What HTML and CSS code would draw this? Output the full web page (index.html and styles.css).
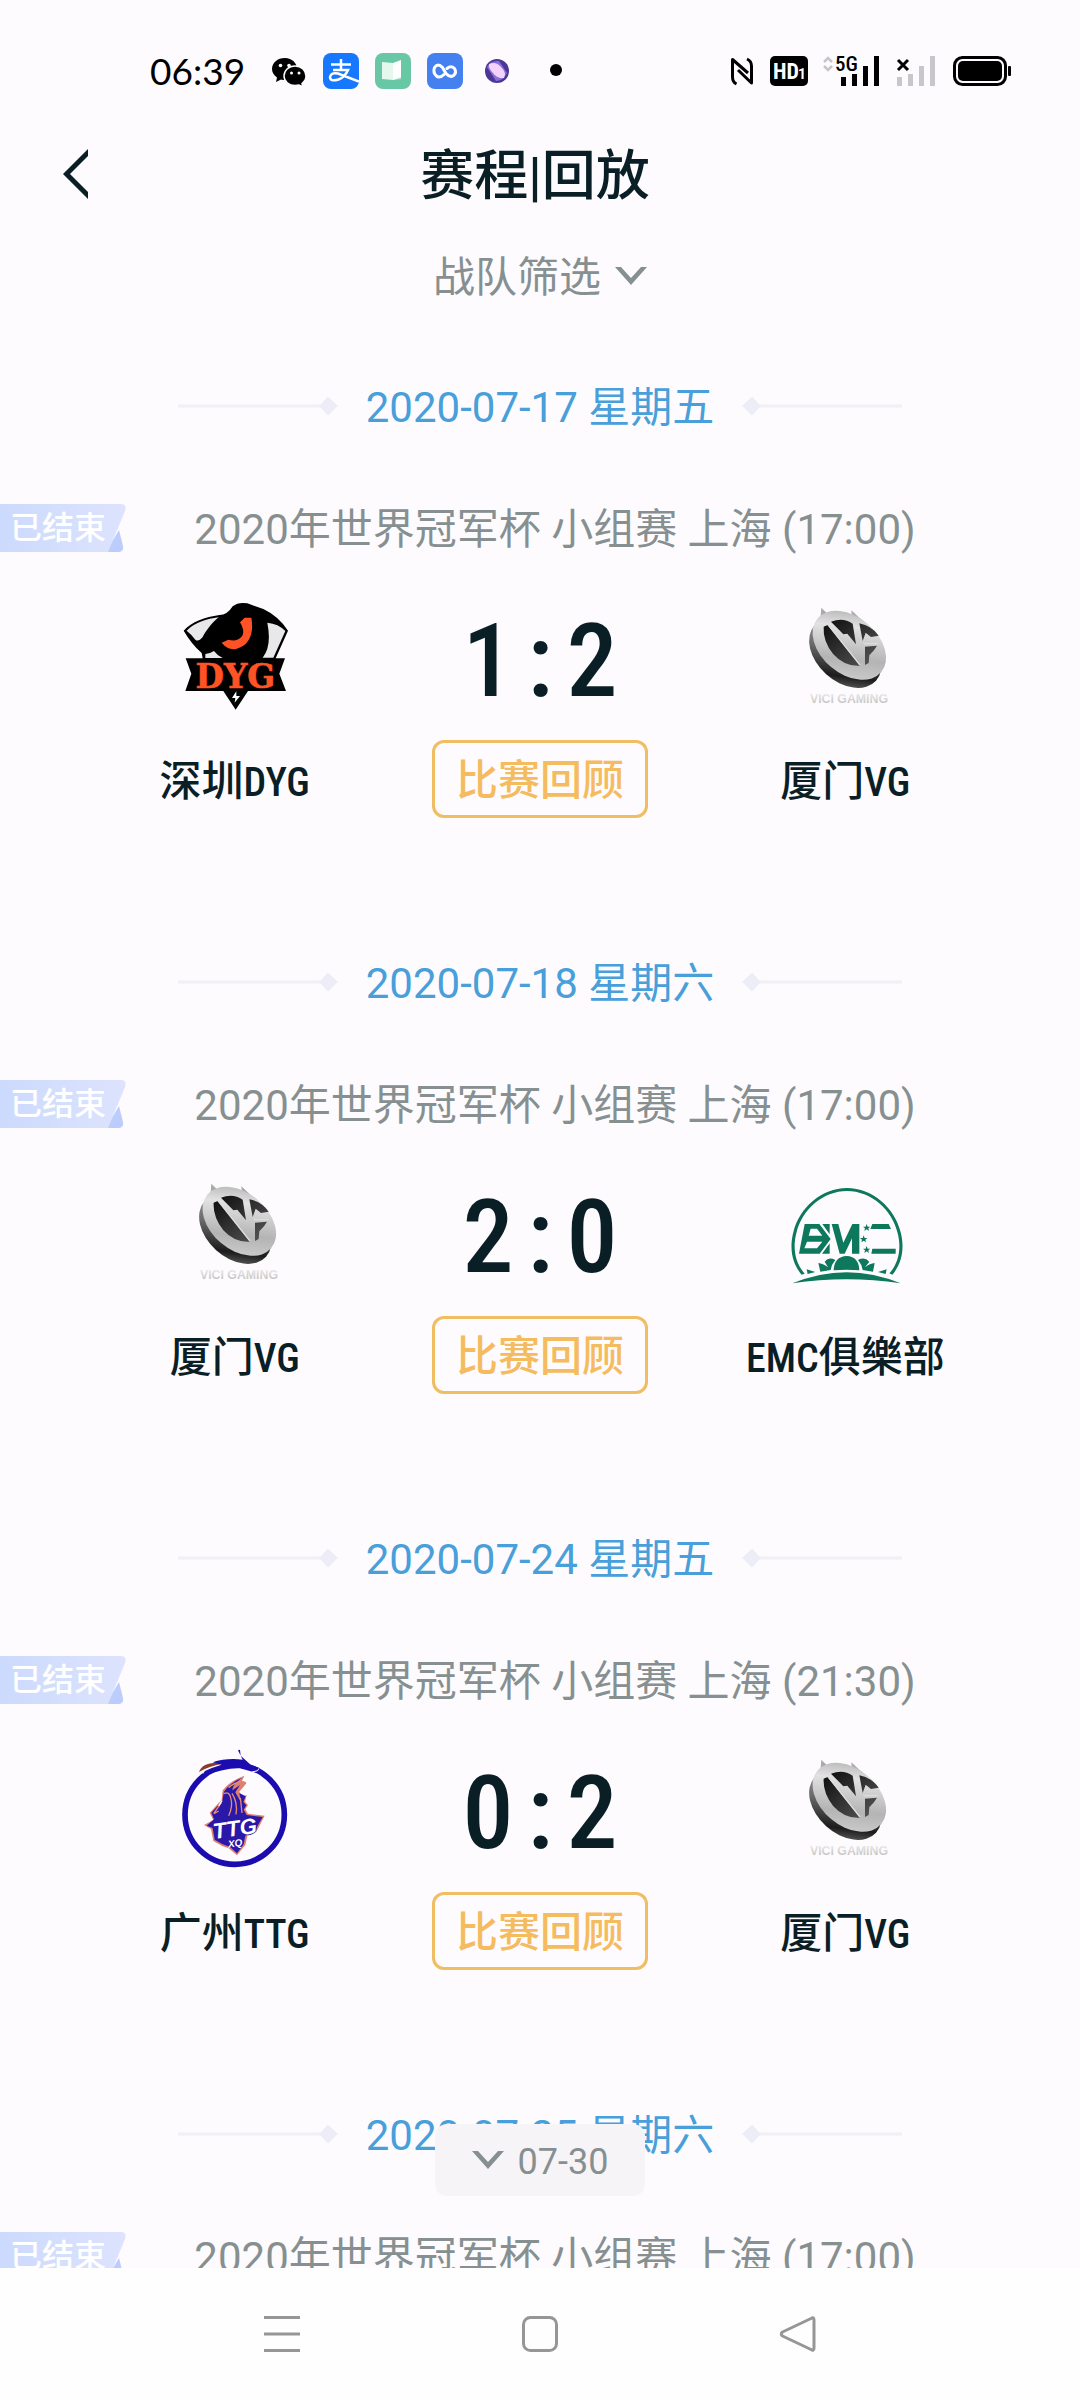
FILE: index.html
```html
<!DOCTYPE html>
<html lang="zh-CN">
<head>
<meta charset="utf-8">
<meta name="viewport" content="width=device-width, initial-scale=1">
<title>赛程|回放</title>
<link rel="stylesheet" href="styles.css">
</head>
<body>
<svg class="sprites" aria-hidden="true">
  <defs>
    <linearGradient id="vg-face" x1="0" y1="0" x2="1" y2="1">
      <stop offset="0" stop-color="#9a9a9a"/><stop offset=".3" stop-color="#e2e2e2"/><stop offset=".65" stop-color="#b4b4b4"/><stop offset="1" stop-color="#d8d8d8"/>
    </linearGradient>
    <linearGradient id="vg-side" x1="0" y1="0" x2="1" y2="1">
      <stop offset="0" stop-color="#b5b5b5"/><stop offset=".45" stop-color="#6a6a6a"/><stop offset=".75" stop-color="#1c1c1c"/><stop offset="1" stop-color="#999"/>
    </linearGradient>
    <linearGradient id="vg-hole" x1="0" y1="0" x2="1" y2="1">
      <stop offset="0" stop-color="#0c0c0c"/><stop offset="1" stop-color="#5a5a5a"/>
    </linearGradient>
    <linearGradient id="vg-word" x1="0" y1="0" x2="0" y2="1">
      <stop offset="0" stop-color="#eee"/><stop offset="1" stop-color="#b8b8b8"/>
    </linearGradient>
    <linearGradient id="badge-fill" x1="0" y1="0" x2="1" y2="0">
      <stop offset="0" stop-color="#ccdafe"/><stop offset="1" stop-color="#dde3fd"/>
    </linearGradient>
  </defs>
  <symbol id="badge" viewBox="0 0 126 48">
    <path fill="#bccdfd" d="M119 26L123 42Q124 48 118 48H106z"/>
    <path fill="url(#badge-fill)" d="M0 0H121Q127 0 125 7L108 48H0z"/>
  </symbol>
  <symbol id="chevron" viewBox="0 0 32 18">
    <path fill="#869090" d="M0 0H6L16 11L26 0H32L16 18z"/>
  </symbol>
  <symbol id="rule" viewBox="0 0 160 20">
    <path fill="#f0f0f5" d="M0 8.500H142V11.500H0z"/>
    <path fill="#ecedf6" d="M141 10L150 0.500L160 10L150 19.500z"/>
  </symbol>
  <symbol id="dyg" viewBox="75 45 360 360">
    <path d="M101 149C125 122 165 108 208 102Q232 102 248 76Q265 62 292 67L340 84Q385 105 414 149L377 232H405L388 278L408 330H294L257 386L220 330H106L124 278L107 232H158L155 216Q125 190 101 149z"/>
    <path fill="#e8e8ea" d="M110 149C134 125 170 113 206 109C190 122 170 145 158 168Q145 184 136 176Q126 162 110 149zM352 125Q385 128 406 150L370 230H338Q366 196 352 125zM166 219Q180 218 192 210Q202 224 218 231H166z"/>
    <path fill="#ff5326" d="M270 124L284 110H304Q314 165 283 192Q244 220 215 185L235 176Q262 184 277 164Q285 148 270 124z"/>
    <path fill="#fff" d="M259 331L246 351H256L254 365L270 345H259z"/>
  </symbol>
  <symbol id="vg" viewBox="75 45 360 360">
    <path fill="#aaa" d="M184 80L181 118L210 106zM274 88L276 110L306 118z"/>
    <ellipse cx="256" cy="216" rx="124" ry="86" fill="url(#vg-side)" transform="rotate(42 256 216)"/>
    <ellipse cx="268" cy="193" rx="125" ry="85" fill="url(#vg-face)" transform="rotate(40 268 193)"/>
    <path fill="url(#vg-hole)" d="M191 137L203 132L300 254Q255 258 220 220Q188 180 191 137zM213 122Q250 108 278 128L288 190L262 158L250 160zM298 127Q335 134 356 164L333 168L317 155L308 180zM315 197L351 194L342 208L328 223L326 246L315 252z"/>
    <path fill="none" stroke="#ddd" stroke-width="4" d="M203 130L300 252M311 188H356"/>
  </symbol>
  <symbol id="emc" viewBox="135 3 360 360">
    <g fill="#0d785c">
      <path d="M185 311C155 277 148 230 160 184C178 110 245 51 321 51C397 51 464 110 482 184C494 230 487 277 457 311L448 307C478 275 484 229 473 187C457 116 393 60 321 60C249 60 185 116 169 187C158 229 164 275 194 308z"/>
      <path d="M157 337Q320 270 482 337Q320 312 157 337z"/>
      <path fill-rule="evenodd" d="M194 159H238L272 204L239 248H177L180 232L187 196zM212 173L206 194H247L231 173zM201 212L193 232H231L247 212zM247 159H269V190zM269 217V248H246z"/>
      <path d="M397 159H446L453 174H391zM397 233H467V248H394z"/>
      <path d="M275 159H295L310 215L337 159H358V248H336V202L314 248H299z"/>
      <path d="M380 159L383 167H391L385 172L387 180L380 175L373 180L375 172L369 167H377zM371 193L374 201H382L376 206L378 214L371 209L364 214L366 206L360 201H368zM380 225L383 233H391L385 238L387 246L380 241L373 246L375 238L369 233H377z"/>
      <path d="M281 298Q282 257 320 255Q357 257 358 298Q320 294 281 298zM254 272Q266 256 286 267Q275 279 272 297L241 302L235 276Q248 277 264 289zM388 272Q374 256 354 267Q365 279 368 297L399 302L404 276Q390 277 375 289zM200 295L226 303L203 309zM440 295L414 303L437 309z"/>
    </g>
  </symbol>
  <symbol id="ttg" viewBox="75 51 360 360">
    <circle cx="254" cy="251" r="149" fill="none" stroke="#1a0cae" stroke-width="17"/>
    <path fill="#fefbff" d="M140 84H240V102L160 132z"/>
    <path fill="#8a3c2c" d="M147 123Q155 96 200 95L220 98Q180 103 147 123z"/>
    <path fill="#1a0cae" d="M188 94Q230 80 278 86L264 58L270 56L272 74L302 101L330 112L320 126L270 112Q225 110 152 138L165 120Q190 108 215 101z"/>
    <path fill="none" stroke="#fff" stroke-width="3" d="M306 123L323 119L327 112"/>
    <path fill="#e0806c" d="M190 267L179 245L215 206L218 178Q240 150 283 134L276 150Q292 152 288 158L268 182L276 198L290 192L285 212L294 222L286 235L294 248L344 254L327 287L320 300L292 316L286 342L261 373L236 352L218 346L190 330L183 294L162 282z"/>
    <path fill="#2a18a8" d="M192 265L184 245L217 209L222 182Q240 156 276 140Q246 163 247 178L270 162L256 184L272 212L268 186L287 196L280 213L289 223L281 236L290 252L338 258L324 283L317 298L286 314L281 340L261 367L240 348L218 340L194 326L188 291L170 284z"/>
    <path fill="none" stroke="#e58b78" stroke-width="4" d="M214 215L191 248M222 188Q238 180 242 200Q250 225 236 254M246 187Q264 215 258 250M271 200L276 246M236 170Q252 155 272 153M192 248L206 240"/>
    <path stroke="#fff" stroke-width="4" d="M206 225L216 209"/>
  </symbol>
</svg>

<div class="screen">
  <div class="status">
    <div class="status-side">
      <time class="clock">06:39</time>
      <svg class="ico" viewBox="0 0 36 36" aria-label="微信">
        <path d="M14 5C6.500 5 1 9.800 1 16C1 19.500 3 22.500 6 24.500L5 29L10 26.500Q12 27 14 27C21 27 26 22 26 16C26 10 21 5 14 5z"/>
        <path stroke="#fefbff" stroke-width="1.500" d="M24 13C17.500 13 13 17.500 13 23C13 28.500 18 32.500 24 32.500Q26 32.500 28 32L32 34L31 30.500C33.500 28.500 35 26 35 23C35 17.500 30.500 13 24 13z"/>
        <g fill="#fefbff"><circle cx="9.500" cy="12.500" r="1.800"/><circle cx="18" cy="12.500" r="1.800"/><circle cx="20.500" cy="20" r="1.500"/><circle cx="28" cy="20" r="1.500"/></g>
      </svg>
      <svg class="ico" viewBox="0 0 36 36" aria-label="支付宝">
        <rect width="36" height="36" rx="8" fill="#1677ff"/>
        <path fill="none" stroke="#fff" stroke-width="2.500" d="M8 11.500H28M18 6V17M10 17H25Q22 24 15.500 26.500Q7 29 7 24Q8 19 15 20.500L36 28.500"/>
      </svg>
      <svg class="ico" viewBox="0 0 36 36" aria-label="阅读">
        <rect width="36" height="36" rx="8" fill="#68c8a6"/>
        <path fill="#e4f8ee" d="M7 9L18 10V27L7 26z"/><path fill="#b9ecd2" d="M18 10L26 9V26L18 27z"/><path fill="#fff" d="M18 10L26 7V24L18 27z"/>
      </svg>
      <svg class="ico" viewBox="0 0 36 36" aria-label="云盘">
        <rect width="36" height="36" rx="8" fill="#4480f0"/>
        <path fill="none" stroke="#fff" stroke-width="3" stroke-linecap="round" d="M20 15.500Q24 12 27.500 15.500Q30 19.500 26.500 22.500Q23 25 19 20.500L15.500 14.500Q11 9.500 7.500 14.500Q5.500 20 10 23.500Q13.500 25 17 21.500"/>
      </svg>
      <svg class="ico" viewBox="0 0 36 36" aria-label="浏览器">
        <circle cx="18" cy="18" r="12" fill="#4b3794"/><path fill="#8b6fd8" d="M8 14Q12 7 20 8L28 20Q24 28 17 28z"/><path fill="#f4d3fb" d="M10 11Q17 8 22 14Q28 20 25 25Q18 26 14 20Q9 15 10 11z"/>
      </svg>
      <svg class="ico" viewBox="0 0 36 36" aria-hidden="true"><circle cx="25" cy="17" r="6"/></svg>
    </div>
    <svg class="signals" viewBox="0 0 282 32" aria-label="NFC HD 5G 电量">
      <path fill="none" stroke="#000" stroke-width="3" stroke-linejoin="round" d="M6.500 29Q2.500 27 2.500 22V4.500L18 18M17 4Q21.500 6 21.500 11V28L8 15"/>
      <rect x="40" y="1" width="38" height="30" rx="5"/>
      <text class="hd" x="43" y="24">HD</text><text class="hd-sub" x="68" y="24">1</text>
      <path fill="none" stroke="#c8c6ca" stroke-width="2.500" d="M94 7L98 3L102 7M94 11L98 15L102 11"/>
      <text class="g5" x="105" y="16">5G</text>
      <path d="M111 22h5v9h-5zM122 19h5v12h-5zM133 11h5v20h-5zM144 1h5v30h-5z"/>
      <path fill="#c8c6ca" d="M167 22h5v9h-5zM178 19h5v12h-5zM189 11h5v20h-5zM200 1h5v30h-5z"/>
      <path stroke="#000" stroke-width="3" d="M168 5L178 15M178 5L168 15"/>
      <rect x="224.500" y="2.500" width="51" height="27" rx="8" fill="none" stroke="#000" stroke-width="3"/>
      <rect x="228" y="6" width="44" height="20" rx="5"/><rect x="278" y="11" width="3" height="10" rx="1"/>
    </svg>
  </div>

  <header class="bar">
    <button class="back" type="button" aria-label="返回"><svg width="26" height="50" viewBox="0 0 26 50"><path fill="#0a1e26" d="M26 0V7L8 25L26 43V50L1 25z"/></svg></button>
    <h1>赛程|回放</h1>
  </header>
  <button class="filter" type="button"><span>战队筛选</span><svg class="chev"><use href="#chevron"/></svg></button>

  <main class="list">
    <section class="day">
      <h2 class="date"><svg class="rule"><use href="#rule"/></svg><span>2020-07-17 星期五</span><svg class="rule flip"><use href="#rule"/></svg></h2>
      <div class="info"><span class="badge"><svg><use href="#badge"/></svg><span>已结束</span></span><p>2020年世界冠军杯 小组赛 上海 (17:00)</p></div>
      <div class="match">
        <div class="team"><svg class="logo" viewBox="0 0 360 360"><use href="#dyg" width="360" height="360"/><text class="dyg-word" x="181" y="276" text-anchor="middle">DYG</text></svg><span class="name">深圳<span class="latin">DYG</span></span></div>
        <div class="result"><div class="score"><span>1</span><span>:</span><span>2</span></div><button class="review" type="button">比赛回顾</button></div>
        <div class="team"><svg class="logo" viewBox="0 0 360 360"><use href="#vg" width="360" height="360"/><text class="vg-word" x="192" y="322" text-anchor="middle" fill="url(#vg-word)">VICI GAMING</text></svg><span class="name">厦门<span class="latin">VG</span></span></div>
      </div>
    </section>
    <section class="day">
      <h2 class="date"><svg class="rule"><use href="#rule"/></svg><span>2020-07-18 星期六</span><svg class="rule flip"><use href="#rule"/></svg></h2>
      <div class="info"><span class="badge"><svg><use href="#badge"/></svg><span>已结束</span></span><p>2020年世界冠军杯 小组赛 上海 (17:00)</p></div>
      <div class="match">
        <div class="team"><svg class="logo" viewBox="0 0 360 360"><use href="#vg" width="360" height="360"/><text class="vg-word" x="192" y="322" text-anchor="middle" fill="url(#vg-word)">VICI GAMING</text></svg><span class="name">厦门<span class="latin">VG</span></span></div>
        <div class="result"><div class="score"><span>2</span><span>:</span><span>0</span></div><button class="review" type="button">比赛回顾</button></div>
        <div class="team"><svg class="logo"><use href="#emc"/></svg><span class="name"><span class="latin">EMC</span>俱樂部</span></div>
      </div>
    </section>
    <section class="day">
      <h2 class="date"><svg class="rule"><use href="#rule"/></svg><span>2020-07-24 星期五</span><svg class="rule flip"><use href="#rule"/></svg></h2>
      <div class="info"><span class="badge"><svg><use href="#badge"/></svg><span>已结束</span></span><p>2020年世界冠军杯 小组赛 上海 (21:30)</p></div>
      <div class="match">
        <div class="team"><svg class="logo" viewBox="0 0 360 360"><use href="#ttg" width="360" height="360"/><g transform="rotate(-8 180 260)"><text class="ttg-word" x="182" y="264" text-anchor="middle">TTG</text><text class="ttg-sub" x="177" y="296" text-anchor="middle">XQ</text></g></svg><span class="name">广州<span class="latin">TTG</span></span></div>
        <div class="result"><div class="score"><span>0</span><span>:</span><span>2</span></div><button class="review" type="button">比赛回顾</button></div>
        <div class="team"><svg class="logo" viewBox="0 0 360 360"><use href="#vg" width="360" height="360"/><text class="vg-word" x="192" y="322" text-anchor="middle" fill="url(#vg-word)">VICI GAMING</text></svg><span class="name">厦门<span class="latin">VG</span></span></div>
      </div>
    </section>
    <section class="day">
      <h2 class="date"><svg class="rule"><use href="#rule"/></svg><span>2020-07-25 星期六</span><svg class="rule flip"><use href="#rule"/></svg></h2>
      <div class="info"><span class="badge"><svg><use href="#badge"/></svg><span>已结束</span></span><p>2020年世界冠军杯 小组赛 上海 (17:00)</p></div>
    </section>
    <button class="jump" type="button"><svg class="chev"><use href="#chevron"/></svg><span>07-30</span></button>
  </main>

  <nav class="nav">
    <button type="button" aria-label="最近任务"><svg viewBox="0 0 40 40"><path stroke="#969696" stroke-width="3" d="M2 3.500H38M2 20H38M2 36.500H38"/></svg></button>
    <button type="button" aria-label="主页"><svg viewBox="0 0 40 40"><rect x="3.500" y="3.500" width="33" height="33" rx="7" fill="none" stroke="#969696" stroke-width="3"/></svg></button>
    <button type="button" aria-label="返回"><svg viewBox="0 0 40 40"><path fill="none" stroke="#969696" stroke-width="3" stroke-linejoin="round" d="M33 4.500Q36 2.500 36 6V34Q36 37.500 33 35.500L4.500 22Q2 20 4.500 18z"/></svg></button>
  </nav>
</div>
</body>
</html>
```
FILE: styles.css
```css
* { box-sizing: border-box; margin: 0; padding: 0; }
body {
  background: #fefbff;
  color: #0a1e26;
  font-family: Roboto, "Noto Sans CJK SC", sans-serif;
}
button { background: none; border: 0; color: inherit; font: inherit; cursor: pointer; }
svg { display: block; }
.sprites { position: absolute; width: 0; height: 0; }

.screen { display: flex; flex-direction: column; height: 100vh; }

.status {
  display: flex;
  justify-content: space-between;
  align-items: center;
  height: 108px;
  padding: 34px 68px 0 150px;
  flex: none;
}
.status-side { display: flex; align-items: center; gap: 16px; }
.clock { font-family: Lato, sans-serif; font-size: 37px; line-height: 36px; color: #000; margin-right: 10px; }
.ico { width: 36px; height: 36px; }
.signals { width: 282px; height: 32px; }
.hd { font: 700 22px "Roboto Condensed", Roboto, sans-serif; fill: #fff; }
.hd-sub { font: 700 14px Roboto, sans-serif; fill: #fff; }
.g5 { font: 500 21px "Roboto Condensed", Roboto, sans-serif; }

.bar {
  display: grid;
  grid-template-columns: 1fr auto 1fr;
  align-items: center;
  height: 132px;
  padding: 0 72px 0 62px;
  flex: none;
}
.back { justify-self: start; }
h1 { padding-top: 6px; font-size: 54px; line-height: 72px; font-weight: 500; }

.filter {
  display: flex;
  align-items: center;
  align-self: center;
  gap: 14px;
  height: 72px;
  color: #869090;
  font-size: 42px;
  line-height: 64px;
  flex: none;
}
.filter span, .date span, .info p, .jump span { padding-top: 4px; }
.chev { width: 32px; height: 18px; }

.list { position: relative; flex: 1; min-height: 0; padding-top: 60px; overflow: hidden; }
.day { display: flex; flex-direction: column; height: 576px; }
.date {
  display: flex;
  align-items: center;
  justify-content: center;
  gap: 28px;
  color: #489fda;
  font-size: 42px;
  font-weight: 400;
  line-height: 64px;
}
.rule { width: 160px; height: 20px; }
.flip { transform: scaleX(-1); }

.info { display: flex; align-items: center; height: 48px; margin-top: 64px; }
.info p { flex: 1; padding-right: 96px; text-align: center; color: #869090; font-size: 42px; line-height: 48px; }
.badge { display: grid; width: 126px; height: 48px; color: #fff; font-size: 32px; font-weight: 500; line-height: 48px; }
.badge svg, .badge span { grid-area: 1 / 1; width: 126px; height: 48px; }
.badge span { padding-left: 10px; }

.match { display: grid; grid-template-columns: repeat(3, 1fr); padding: 44px 82px 0; }
.team { display: flex; flex-direction: column; align-items: center; gap: 36px; }
.logo { width: 120px; height: 120px; }
.name { font-size: 42px; font-weight: 500; line-height: 60px; }
.latin { font-family: "Roboto Condensed", Roboto, sans-serif; font-size: 40px; }
.result { display: flex; flex-direction: column; align-items: center; gap: 16px; }
.score {
  display: grid;
  grid-template-columns: repeat(3, 52px);
  height: 128px;
  font-family: "Roboto Condensed", Roboto, sans-serif;
  font-size: 102px;
  font-weight: 500;
  line-height: 130px;
  text-align: center;
}
.review {
  height: 78px;
  padding: 4px 21px 0;
  border: 3px solid #f0bd62;
  border-radius: 12px;
  color: #f5bc5f;
  font-size: 42px;
  font-weight: 500;
  line-height: 68px;
}

.jump {
  position: absolute;
  right: 0;
  bottom: 72px;
  left: 0;
  display: flex;
  align-items: center;
  justify-content: center;
  gap: 14px;
  width: 210px;
  height: 72px;
  margin: 0 auto;
  border-radius: 12px;
  background: #f7f4f8;
  color: #869090;
  font-size: 36px;
}

.nav {
  display: flex;
  justify-content: center;
  align-items: center;
  gap: 218px;
  height: 132px;
  background: #fefefe;
  flex: none;
}
.nav svg { width: 40px; height: 40px; }

.dyg-word { font: 700 98px "DejaVu Serif", serif; fill: #ff5326; stroke: #ff5326; stroke-width: 2px; }
.vg-word { font: 700 37px "Liberation Sans", sans-serif; }
.ttg-word { font: italic 700 66px "Liberation Sans", sans-serif; fill: #fff; stroke: #2a18a8; stroke-width: 4px; paint-order: stroke; }
.ttg-sub { font: italic 700 30px "Liberation Sans", sans-serif; fill: #fff; }
```
